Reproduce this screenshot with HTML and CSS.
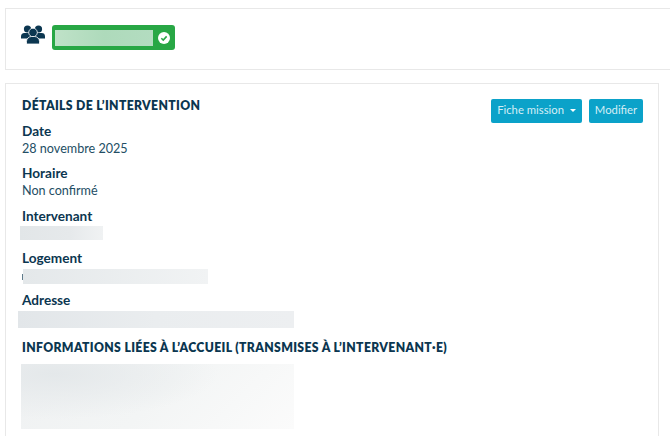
FILE: index.html
```html
<!DOCTYPE html>
<html lang="fr">
<head>
<meta charset="utf-8">
<title>Détails de l'intervention</title>
<link rel="stylesheet" href="styles.css">
</head>
<body>
<main class="page">
  <section class="card card-top">
    <svg class="team-icon" viewBox="0 0 24 19" width="24" height="19" aria-hidden="true">
      <circle cx="6.500" cy="4" r="3.600"/>
      <circle cx="17.500" cy="4" r="3.600"/>
      <path d="M0 13.500v-2a3.500 3.500 0 0 1 3.500-3.500h6a3.500 3.500 0 0 1 1 .2v5.300zM24 13.500v-2a3.500 3.500 0 0 0-3.500-3.500h-6a3.500 3.500 0 0 0-1 .2v5.300z"/>
      <circle class="front" cx="12" cy="7.500" r="4.300"/>
      <path class="front" d="M5.500 19v-2.500a5 5 0 0 1 5-5h3a5 5 0 0 1 5 5v2.500z"/>
    </svg>
    <div class="status-badge">
      <span class="badge-mask"></span>
      <svg class="badge-check" viewBox="0 0 14 14" width="12" height="12" aria-hidden="true"><circle cx="7" cy="7" r="7" fill="#fff"/><path d="M3.900 7.300l2.200 2.100 4-4.300" fill="none" stroke="#28a745" stroke-width="1.800"/></svg>
    </div>
  </section>
  <section class="card card-main">
    <div class="actions">
      <button class="btn btn-menu" type="button">Fiche mission <span class="caret"></span></button>
      <button class="btn" type="button">Modifier</button>
    </div>
    <h2 class="heading">DÉTAILS DE L’INTERVENTION</h2>
    <dl class="details">
      <div class="field"><dt>Date</dt><dd>28 novembre 2025</dd></div>
      <div class="field"><dt>Horaire</dt><dd>Non confirmé</dd></div>
      <div class="field"><dt>Intervenant</dt><dd><span class="mask mask-person"></span></dd></div>
      <div class="field"><dt>Logement</dt><dd><span class="mask mask-home"></span></dd></div>
      <div class="field"><dt>Adresse</dt><dd><span class="mask mask-address"></span></dd></div>
    </dl>
    <h2 class="heading heading-second">INFORMATIONS LIÉES À L’ACCUEIL (TRANSMISES À L’INTERVENANT·E)</h2>
    <div class="mask mask-info"></div>
  </section>
</main>
</body>
</html>
```
FILE: styles.css
```css
* { box-sizing: border-box; }
html, body { margin: 0; height: 100%; overflow: hidden; background: #fff; }
body { font-family: "Lato", "Liberation Sans", sans-serif; color: #0b3650; font-size: 13px; }
.page { padding: 8px 11px 0 5px; display: flex; flex-direction: column; gap: 13px; }
.card { border: 1px solid #e8e8e8; background: #fff; }
.card-top { height: 62px; margin-right: -20px; padding: 16px 15px; display: flex; align-items: flex-start; gap: 7px; }
.team-icon { fill: #0b3650; flex: none; }
.team-icon .front { stroke: #fff; stroke-width: .8; }
.status-badge { width: 123px; height: 25px; background: #28a745; border-radius: 3px; padding: 4px 5px 4px 3px; display: flex; align-items: center; gap: 3px; }
.badge-mask { width: 99px; height: 16px; background: linear-gradient(90deg, #bfe2c8, #aedabb 50%, #b3dcc0); }
.badge-check { margin-left: 2px; flex: none; }
.card-main { position: relative; height: 353px; padding: 14px 16px; border-bottom: 0; }
.actions { position: absolute; top: 15px; right: 15px; display: flex; gap: 7px; }
.btn { font: inherit; font-size: 11.300px; color: #d5eef6; background: #0ba2c9; border: 0; border-radius: 2px; height: 24px; padding: 0 0 3px; width: 54px; white-space: nowrap; }
.btn-menu { width: 91px; }
.caret { display: inline-block; vertical-align: 2px; margin-left: 3px; border: 3px solid transparent; border-top-color: #fff; border-bottom: 0; }
.heading { margin: 0; font-size: 12.200px; line-height: 15px; font-weight: 800; letter-spacing: .36px; color: #0b3650; }
.details { margin: 9px 0 0; }
.field { height: 42.300px; }
dt { font-weight: 700; font-size: 13.600px; line-height: 18px; }
dd { margin: 0; font-size: 12.600px; line-height: 18px; color: #234e64; }
.mask { display: block; position: relative; }
.mask-person { width: 83px; height: 14px; margin: 1px 0 0 -2px; background: linear-gradient(90deg, #e2e6e8, #e6e9eb 60%, #f0f2f3); }
.mask-home { width: 185px; height: 15px; margin: 2px 0 0 1px; background: linear-gradient(90deg, #e4e8ea, #f1f3f4); }
.mask-home::before { content: ""; position: absolute; left: -1px; top: 5px; width: 1px; height: 6px; background: #5f7b8b; }
.mask-address { width: 276px; height: 17px; margin: 2px 0 0 -4px; background: linear-gradient(90deg, #e2e6e9, #eaedef 50%, #edeff1); }
.heading-second { margin-top: 7px; }
.mask-info { width: 273px; height: 65px; margin: 9px 0 0 -1px; background: radial-gradient(ellipse 60% 70% at 12% 15%, #e4e8ea, rgba(228,232,234,0)), linear-gradient(135deg, #eff1f2, #f3f5f5 50%, #fbfbfb); }
```
